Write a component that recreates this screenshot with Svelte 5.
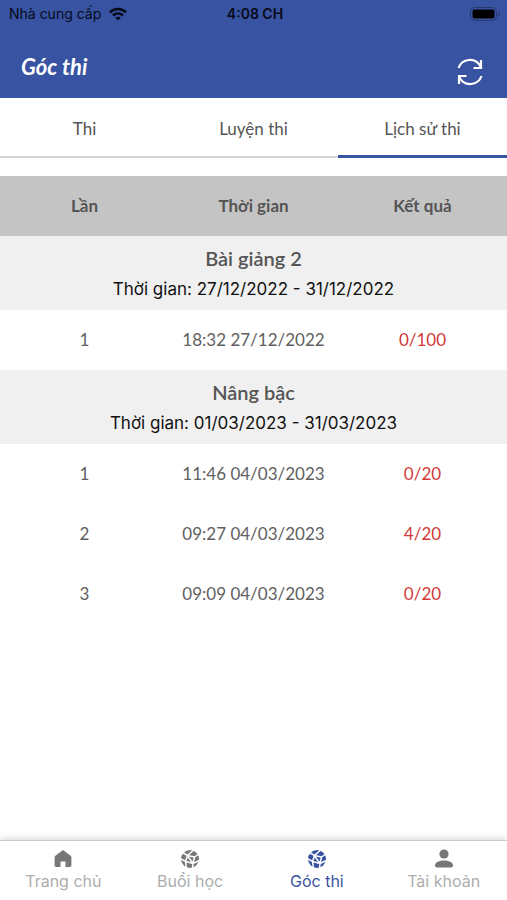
<script>
  const tabs = ['Thi', 'Luyện thi', 'Lịch sử thi'];
  let activeTab = $state(2);

  const groups = [
    {
      name: 'Bài giảng 2',
      range: '27/12/2022 - 31/12/2022',
      attempts: [{ at: '18:32 27/12/2022', score: '0/100' }]
    },
    {
      name: 'Nâng bậc',
      range: '01/03/2023 - 31/03/2023',
      attempts: [
        { at: '11:46 04/03/2023', score: '0/20' },
        { at: '09:27 04/03/2023', score: '4/20' },
        { at: '09:09 04/03/2023', score: '0/20' }
      ]
    }
  ];

  const links = [
    { label: 'Trang chủ', icon: 'home' },
    { label: 'Buổi học', icon: 'ball' },
    { label: 'Góc thi', icon: 'ball', current: true },
    { label: 'Tài khoản', icon: 'person' }
  ];
</script>

<div class="app">
  <header>
    <div class="status">
      <span class="carrier">
        Nhà cung cấp
        <svg width="18" height="14" viewBox="0 0 18 14" fill="none" stroke="#060a18" stroke-width="2.6" aria-hidden="true">
          <path d="M1 5.2C5.5.9 12.5.9 17 5.2" />
          <path d="M4 8.5c2.9-2.7 7.1-2.7 10 0" />
          <path d="M9 13.5 6.2 10.7c1.6-1.4 4-1.4 5.6 0z" fill="#060a18" stroke="none" />
        </svg>
      </span>
      <span class="clock">4:08 CH</span>
      <span class="battery">
        <svg width="31" height="14" viewBox="0 0 31 14" aria-hidden="true">
          <rect x=".5" y=".5" width="26" height="13" rx="4" fill="none" stroke="#28396f" stroke-width="1" />
          <rect x="2.500" y="2.500" width="22" height="9" rx="2" fill="#000" />
          <path d="M28.500 5c2 .6 2 3.400 0 4z" fill="#28396f" />
        </svg>
      </span>
    </div>
    <div class="title">
      <h1>Góc thi</h1>
      <button class="refresh" aria-label="Tải lại">
        <svg width="26" height="28" viewBox="0 0 26 28" fill="none" stroke="#fff" stroke-width="2.200" aria-hidden="true">
          <path d="M1.500 10C5 .2 18.500-1 23.500 8.500" />
          <path d="M24 2v8h-7.500" />
          <path d="M24.500 18C21 27.800 7.500 29 2.500 19.500" />
          <path d="M2 26v-8h7.500" />
        </svg>
      </button>
    </div>
  </header>

  <div class="tabs" role="tablist">
    {#each tabs as tab, i}
      <button role="tab" aria-selected={i === activeTab} onclick={() => (activeTab = i)}>{tab}</button>
    {/each}
  </div>

  <main>
    <table>
      <thead>
        <tr><th scope="col">Lần</th><th scope="col">Thời gian</th><th scope="col">Kết quả</th></tr>
      </thead>
      {#each groups as group}
        <tbody>
          <tr class="group">
            <th colspan="3" scope="rowgroup">
              <span class="name">{group.name}</span>
              <span class="range">Thời gian: {group.range}</span>
            </th>
          </tr>
          {#each group.attempts as attempt, i}
            <tr>
              <td>{i + 1}</td>
              <td>{attempt.at}</td>
              <td class="score">{attempt.score}</td>
            </tr>
          {/each}
        </tbody>
      {/each}
    </table>
  </main>

  <nav>
    {#each links as link}
      <a href="#{link.icon}" class:current={link.current} aria-current={link.current ? 'page' : undefined}>
        <svg width="20" height="20" viewBox="0 0 20 20" fill="currentColor" aria-hidden="true">
          {#if link.icon === 'home'}
            <path d="M10 1 17.600 6.800q.8.6.8 1.600v8.200q0 1.400-1.400 1.400h-4.500v-5.500h-5V18H3q-1.400 0-1.400-1.400V8.400q0-1 .8-1.600z" />
          {:else if link.icon === 'person'}
            <circle cx="10" cy="5" r="4.600" />
            <path d="M1 16.500C1 9.800 19 9.800 19 16.500q0 2-2 2H3q-2 0-2-2z" />
          {:else}
            <circle cx="10" cy="10" r="9" />
            <g fill="none" stroke="#fff" stroke-width="1.500">
              <path d="M2.500 3.500 7.500 6.500 13.500 1M7.500 6.500 5.500 12.500 0 9.500M5.500 12.500 6.500 19.500M5.500 12.500 13 14.500 19.500 11.500M13 14.500 12.500 19.500M7.500 6.500 14.500 8 13 14.500M14.500 8 19 5M7.500 7l5.500 7.500" />
            </g>
          {/if}
        </svg>
        <span>{link.label}</span>
      </a>
    {/each}
  </nav>
</div>

<style>
  :global(body) {
    margin: 0;
    background: #fff;
  }

  .app {
    display: flex;
    flex-direction: column;
    min-height: 100vh;
    color: #555;
    font: 17px/24px Lato, "Noto Sans", sans-serif;
  }

  button {
    padding: 0;
    border: 0;
    background: none;
    color: inherit;
    font: inherit;
    cursor: pointer;
  }

  header {
    background: #3853a2;
  }

  .status {
    display: grid;
    grid-template-columns: 1fr auto 1fr;
    align-items: center;
    height: 28px;
    padding: 0 6px 0 9px;
    color: #060a18;
    font: 14px/20px Inter, "Noto Sans", sans-serif;
  }

  .carrier {
    display: flex;
    align-items: center;
    gap: 8px;
  }

  .clock {
    font-weight: 600;
  }

  .battery {
    display: flex;
    justify-content: flex-end;
  }

  .title {
    display: flex;
    justify-content: space-between;
    height: 70px;
    padding: 0 24px 0 21px;
  }

  h1 {
    margin: 0;
    padding-top: 25px;
    color: #fff;
    font-size: 22px;
    font-style: italic;
    font-weight: 700;
    line-height: 28px;
  }

  .refresh {
    display: flex;
    padding-top: 30px;
  }

  .tabs {
    display: grid;
    grid-template-columns: repeat(3, 1fr);
    height: 60px;
    margin-bottom: 18px;
  }

  .tabs button {
    padding-top: 4px;
    border-bottom: 2px solid #d6d6d6;
  }

  .tabs button[aria-selected='true'] {
    border-bottom: 3px solid #3853a2;
  }

  main {
    flex: 1;
  }

  table {
    width: 100%;
    border-collapse: collapse;
    table-layout: fixed;
    text-align: center;
  }

  th,
  td {
    height: 60px;
    padding: 0;
  }

  td {
    color: #606060;
  }

  thead {
    background: #c4c4c4;
  }

  .group th {
    height: 74px;
    background: #f0f0f0;
  }

  .group span {
    display: block;
  }

  .name {
    font-size: 20px;
    font-weight: 600;
    line-height: 32px;
  }

  .range {
    color: #111;
    font: 17px/30px Inter, "Noto Sans", sans-serif;
  }

  .score {
    color: #d03a3a;
  }

  nav {
    display: grid;
    grid-template-columns: repeat(4, 1fr);
    height: 59px;
    border-top: 1px solid #ccc;
    box-shadow: 0 -2px 6px #0002;
  }

  nav a {
    display: flex;
    flex-direction: column;
    align-items: center;
    padding-top: 8px;
    color: #777;
    font: 16px/24px Inter, "Noto Sans", sans-serif;
    text-decoration: none;
  }

  nav span {
    color: #adadad;
  }

  nav .current,
  .current span {
    color: #3853a2;
  }
</style>
